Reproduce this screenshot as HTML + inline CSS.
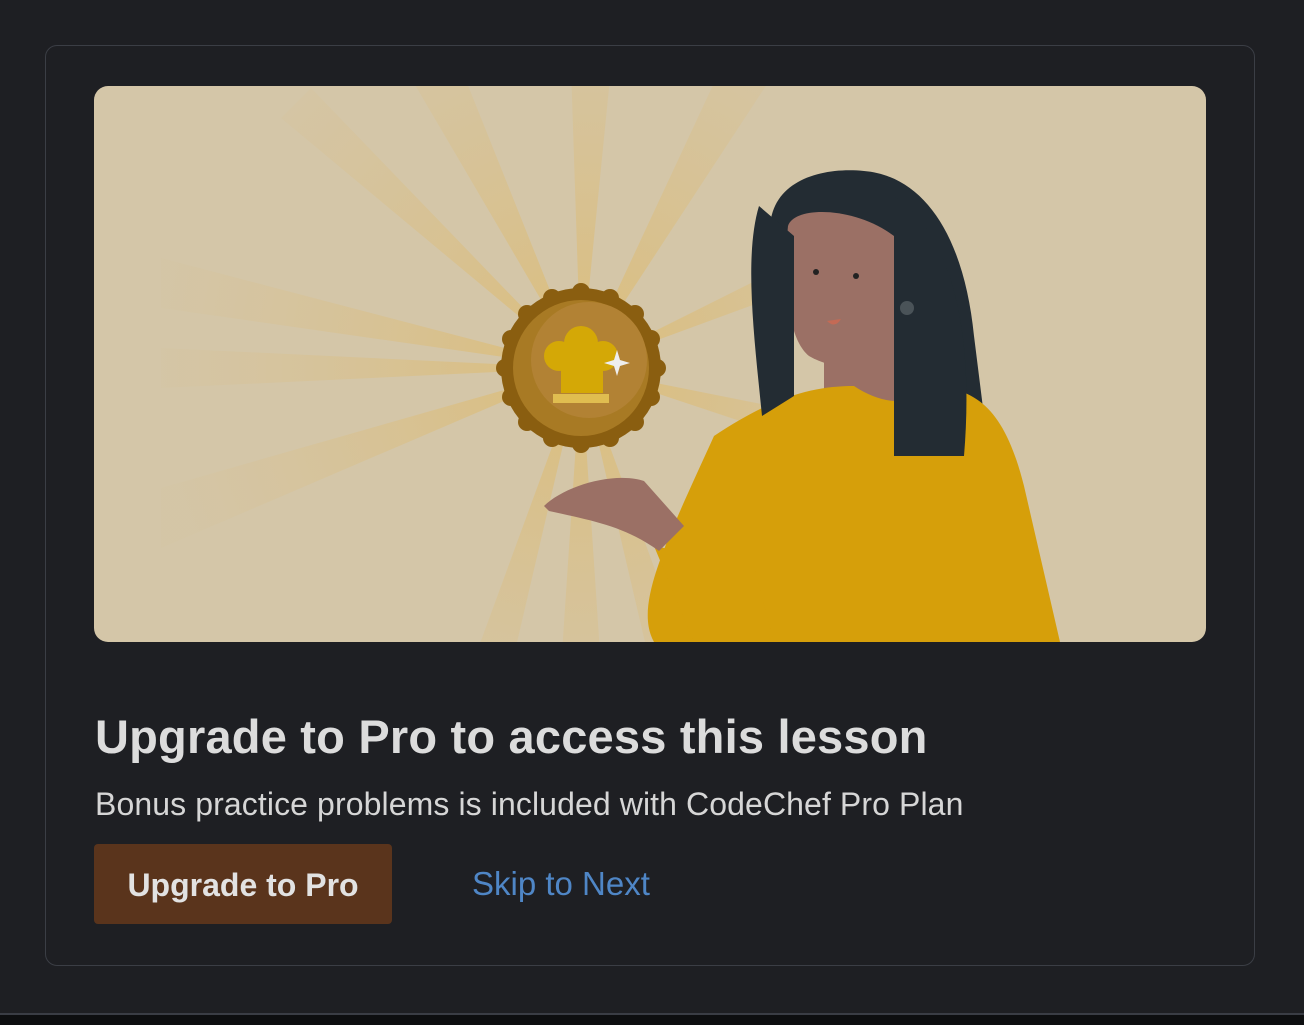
<!DOCTYPE html>
<html><head><meta charset="utf-8"><style>
html,body{margin:0;padding:0;width:1304px;height:1025px;background:#1e1f23;overflow:hidden;font-family:"Liberation Sans","DejaVu Sans",sans-serif}
.card{position:absolute;left:45px;top:45px;width:1210px;height:921px;border:1.5px solid #3b3e45;border-radius:12px;box-sizing:border-box}
.img{position:absolute;left:94px;top:86px;width:1112px;height:556px;border-radius:14px;overflow:hidden;background:#d4c6a8}
h1{position:absolute;left:95px;top:709px;margin:0;font-size:47px;font-weight:bold;color:#dcdcdc;letter-spacing:0.2px;white-space:nowrap}
.sub{position:absolute;left:95px;top:786px;font-size:32px;color:#d6d6d6;white-space:nowrap;letter-spacing:0.1px}
.btn{position:absolute;left:94px;top:844px;width:298px;height:80px;background:#5a341c;border-radius:4px;color:#e2e2e2;font-size:32px;font-weight:bold;line-height:82px;text-align:center}
.skip{position:absolute;left:472px;top:865px;font-size:33px;color:#4f86c6;white-space:nowrap}
.foot{position:absolute;left:0;top:1013px;width:1304px;height:2px;background:#3a3d45}
.foot2{position:absolute;left:0;top:1015px;width:1304px;height:10px;background:#0d0e10}
</style></head><body>
<div class="card"></div>
<div class="img">
<svg width="1112" height="556" viewBox="0 0 1112 556">
<defs><radialGradient id="rg" cx="0" cy="0" r="420" gradientUnits="userSpaceOnUse"><stop offset="0" stop-color="#dcbd78" stop-opacity="0.95"/><stop offset="1" stop-color="#d8c090" stop-opacity="0.1"/></radialGradient></defs>
<g transform="translate(487,282)" fill="url(#rg)">
<polygon points="0,0 -170,-290 -120,-300"/>
<polygon points="0,0 -10,-300 30,-300"/>
<polygon points="0,0 140,-300 190,-290"/>
<polygon points="0,0 300,-150 300,-110"/>
<polygon points="0,0 -420,-110 -420,-60"/>
<polygon points="0,0 -420,-20 -420,20"/>
<polygon points="0,0 -420,120 -420,180"/>
<polygon points="0,0 -110,300 -70,300"/>
<polygon points="0,0 70,300 110,300"/>
<polygon points="0,0 300,60 300,100"/>
<polygon points="0,0 -300,-250 -270,-280"/>
<polygon points="0,0 -20,300 20,300"/>
</g>
<g transform="translate(487,282)">
<circle r="80" fill="#8a5e10"/>
<g fill="#8a5e10"><circle cx="0" cy="-76" r="9"/><circle cx="0" cy="76" r="9"/><circle cx="-76" cy="0" r="9"/><circle cx="76" cy="0" r="9"/><circle cx="54" cy="54" r="9"/><circle cx="-54" cy="54" r="9"/><circle cx="54" cy="-54" r="9"/><circle cx="-54" cy="-54" r="9"/><circle cx="29" cy="-70" r="9"/><circle cx="-29" cy="-70" r="9"/><circle cx="29" cy="70" r="9"/><circle cx="-29" cy="70" r="9"/><circle cx="70" cy="29" r="9"/><circle cx="70" cy="-29" r="9"/><circle cx="-70" cy="29" r="9"/><circle cx="-70" cy="-29" r="9"/></g>
<circle r="68" fill="#a87a24"/>
<circle cx="8" cy="-8" r="58" fill="#b28234"/>
<circle cx="-22" cy="-12" r="15" fill="#d4a806"/><circle cx="0" cy="-25" r="17" fill="#d4a806"/><circle cx="22" cy="-12" r="15" fill="#d4a806"/>
<rect x="-20" y="-15" width="42" height="40" fill="#d4a806"/>
<rect x="-28" y="26" width="56" height="9" fill="#e0bd50"/>
<path d="M33 -8 l3 -10 l3 10 l10 3 l-10 3 l-3 10 l-3 -10 l-10 -3z" fill="#eee"/>
</g>
<path d="M680 170 C660 100 720 80 770 85 C830 90 870 150 880 250 L895 370 L800 370 L790 200z" fill="#232c33"/>
<path d="M694 140 C700 120 760 120 800 150 L810 270 C780 285 740 285 715 270 C690 250 690 180 694 140z" fill="#9b7065"/>
<rect x="730" y="250" width="80" height="90" fill="#9b7065"/>
<path d="M620 350 C680 310 720 300 760 300 C790 320 820 320 830 300 C880 300 910 320 930 400 L966 556 L600 556 L560 556 C540 520 570 460 620 350z" fill="#d69f0a"/>
<path d="M560 460 L600 556 L680 556 L660 480z" fill="#d69f0a"/>
<path d="M665 120 C650 170 660 250 668 330 L700 310 L700 150z" fill="#232c33"/>
<path d="M800 110 C860 150 880 250 870 370 L800 370z" fill="#232c33"/>
<path d="M450 420 C470 400 520 385 550 395 L590 440 L565 465 C530 440 500 435 455 425z" fill="#9b7065"/>
<circle cx="813" cy="222" r="7" fill="#4a5358"/>
<circle cx="722" cy="186" r="3" fill="#222"/><circle cx="762" cy="190" r="3" fill="#222"/>
<path d="M733 235 q8 8 14 -2" fill="#c46a55"/>
</svg>
</div>
<h1>Upgrade to Pro to access this lesson</h1>
<div class="sub">Bonus practice problems is included with CodeChef Pro Plan</div>
<div class="btn">Upgrade to Pro</div>
<div class="skip">Skip to Next</div>
<div class="foot"></div><div class="foot2"></div>
</body></html>
